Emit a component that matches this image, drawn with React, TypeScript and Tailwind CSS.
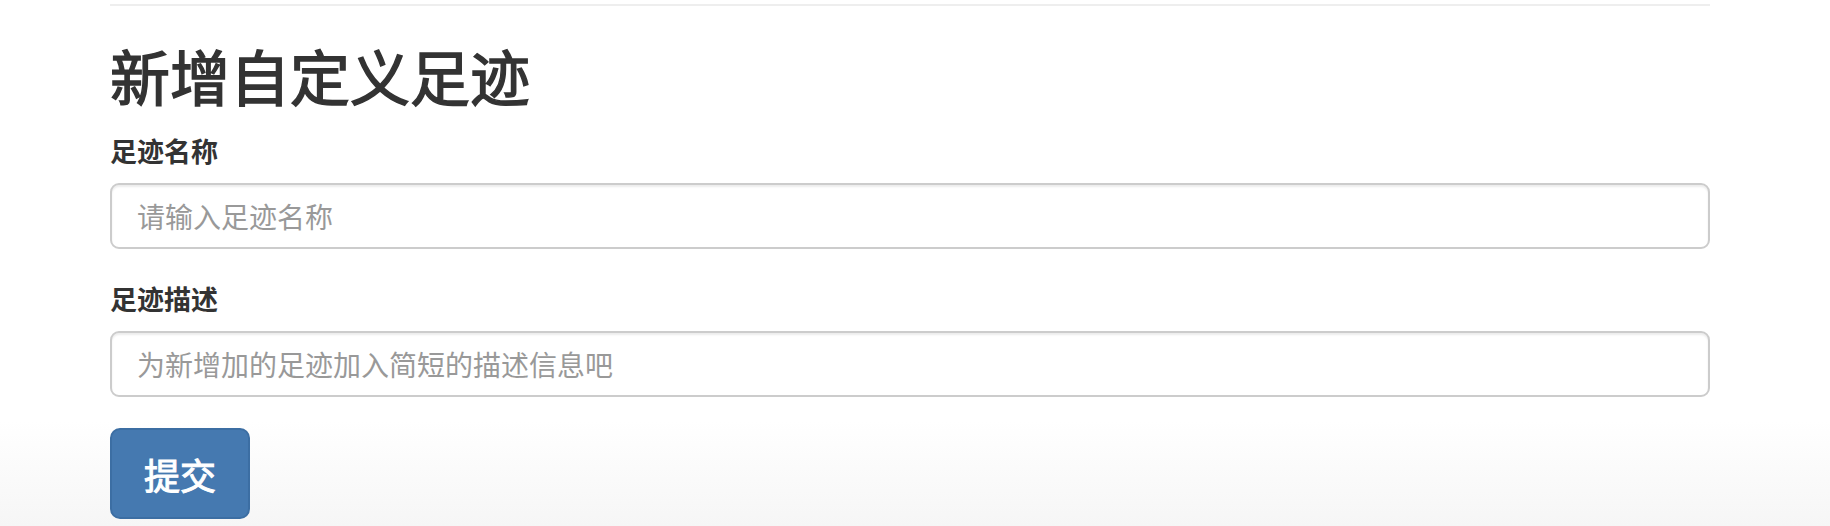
const fontStack = { fontFamily: '"Noto Sans CJK SC", "Noto Sans", sans-serif' };

const Field = ({ id, label, placeholder, className }: { id: string; label: string; placeholder: string; className: string }) => (
  <div className={`flex flex-col ${className}`}>
    <label htmlFor={id} className="font-bold text-[27px] leading-[36px] text-[#333]">
      {label}
    </label>
    <input
      id={id}
      type="text"
      placeholder={placeholder}
      className="mt-[14px] w-full h-[66px] pl-[25px] pr-4 text-[28px] text-[#555] placeholder:text-[#999] border-2 border-[#ccc] rounded-[9px] bg-white outline-none shadow-[inset_0_2px_2px_rgba(0,0,0,0.075)]"
    />
  </div>
);

export default function App() {
  return (
    <div
      style={fontStack}
      className="min-h-[526px] w-full bg-linear-to-b from-white from-[80%] to-[#f6f6f6] pl-[110px]">
      <div className="w-[1600px] flex flex-col">
        <div className="mt-[4px] border-t-2 border-[#eee]" />

        {/* medium weight isn't installed, thicken the regular face a bit */}
        <h1 className="mt-[36px] text-[60px] leading-[66px] font-normal text-[#333] [-webkit-text-stroke:1.5px_#333]">
          新增自定义足迹
        </h1>

        <form autoComplete="off" noValidate className="flex flex-col">
          <Field id="name" label="足迹名称" placeholder="请输入足迹名称" className="mt-[25px]" />
          <Field id="desc" label="足迹描述" placeholder="为新增加的足迹加入简短的描述信息吧" className="mt-[32px]" />

          <button
            type="submit"
            className="mt-[31px] w-[140px] h-[91px] flex items-center justify-center rounded-[10px] border-2 border-[#3c6ea3] bg-[#4579b0] text-white text-[36px] leading-none [-webkit-text-stroke:1px_white]">
            提交
          </button>
        </form>
      </div>
    </div>
  );
}
